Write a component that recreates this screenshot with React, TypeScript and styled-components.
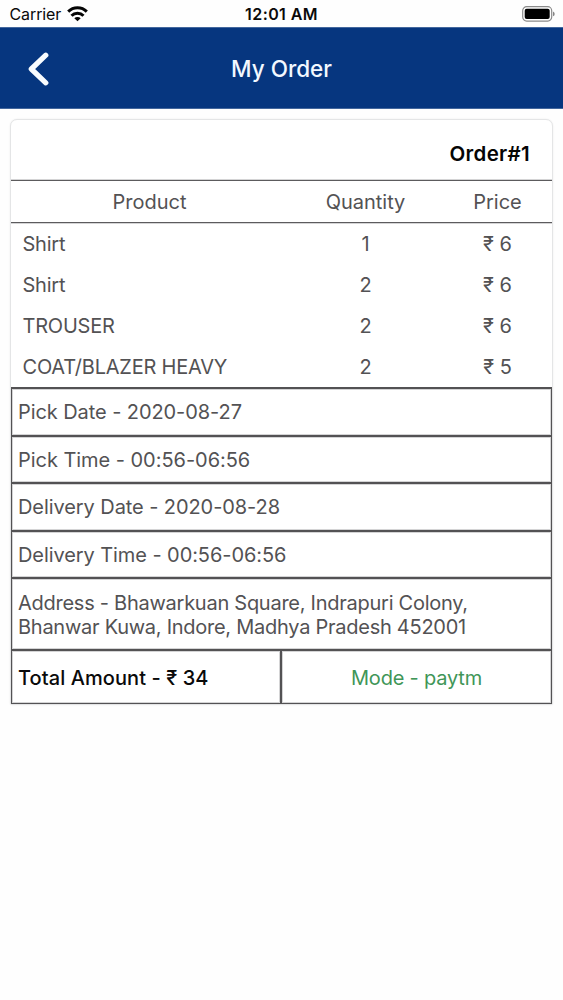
import React from 'react';
import styled, { createGlobalStyle } from 'styled-components';

const GlobalStyle = createGlobalStyle`
  *, *::before, *::after { box-sizing: border-box; }
  html, body { margin: 0; background: #fefefe; }
  body { font-family: Inter, 'Liberation Sans', sans-serif; color: #535254; }
`;

const Screen = styled.main`
  min-height: 1000px;
  background: #fefefe;
`;

const StatusBar = styled.div`
  display: grid;
  grid-template-columns: 1fr auto 1fr;
  align-items: center;
  height: 27px;
  padding: 1px 8px 0 9.5px;
  color: #0a0a0a;
  font-size: 16px;
`;

const Carrier = styled.div`
  display: flex;
  align-items: center;
  gap: 6px;
  letter-spacing: -0.1px;
`;

const Clock = styled.div`
  margin-right: 1.5px;
  font-weight: 600;
  font-size: 16px;
  letter-spacing: 0.4px;
`;

const BatterySlot = styled.div`
  display: flex;
  justify-content: flex-end;
`;

const Header = styled.header`
  display: grid;
  grid-template-columns: 80px 1fr 80px;
  align-items: center;
  height: 82px;
  background: #06367f;
  border: solid #43679d;
  border-width: 1px 0;
`;

const BackButton = styled.button`
  display: flex;
  padding: 1px 0 0 28px;
  border: 0;
  background: none;
  color: #f8fcff;
`;

const Title = styled.h1`
  margin: 0;
  text-align: center;
  color: #f3f9ff;
  font-size: 22.5px;
  font-weight: 500;
  letter-spacing: 0;
`;

const Card = styled.section`
  margin: 10px 10px 0;
  border: 1px solid #e4e5e6;
  border-radius: 7px 7px 2px 2px;
  background: #fff;
  box-shadow: 0 0 2px rgba(0, 0, 0, 0.08);
`;

const OrderNumber = styled.div`
  display: flex;
  justify-content: flex-end;
  align-items: center;
  height: 60px;
  padding: 7px 22px 1px 0;
  color: #050505;
  font-size: 20.5px;
  font-weight: 600;
  letter-spacing: 0.3px;
`;

const ProductRow = styled.div<{ $head?: boolean }>`
  display: grid;
  grid-template-columns: 277px 155px 109px;
  align-items: center;
  height: ${(p) => (p.$head ? '43px' : '40.75px')};
  border: solid #5c5b5d;
  border-width: ${(p) => (p.$head ? '1px 0' : '0')};
  box-shadow: ${(p) => (p.$head ? '0 -1px 0 #d4d4d5, 0 1px 0 #d4d4d5' : 'none')};
  font-size: 20px;
`;

const Products = styled.div`
  padding: 1px 0 0;
  height: 164px;
`;

const Cell = styled.span<{ $align?: string }>`
  padding-left: ${(p) => (p.$align === 'left' ? '11.5px' : '0')};
  letter-spacing: ${(p) => (p.$align === 'left' ? '-0.22px' : '0')};
  text-align: ${(p) => p.$align ?? 'center'};
`;

const Details = styled.div`
  border: 1px solid #535254;
  border-top-width: 2px;
`;

const DetailRow = styled.div<{ $height: number; $tracking?: number }>`
  display: flex;
  align-items: center;
  height: ${(p) => p.$height}px;
  padding: 0 6px;
  border-bottom: 2px solid #535254;
  box-shadow: inset 0 0 0 1px #d4d4d5;
  font-size: 20px;
  line-height: 24px;
  letter-spacing: ${(p) => p.$tracking ?? -0.08}px;
`;

const Address = styled.span`
  display: block;
  padding-top: 2px;
`;

const Summary = styled.div`
  display: grid;
  grid-template-columns: 270px 1fr;
  height: 52px;
  font-size: 20px;
`;

const Total = styled.div`
  display: flex;
  align-items: center;
  padding: 2px 0 0 6px;
  border-right: 2px solid #535254;
  box-shadow: inset 0 0 0 1px #d4d4d5;
  color: #0a0a0a;
  font-weight: 500;
  letter-spacing: 0.08px;
`;

const Mode = styled.div`
  display: flex;
  align-items: center;
  justify-content: center;
  padding-top: 2px;
  box-shadow: inset 0 0 0 1px #d4d4d5;
  color: #3f9658;
  letter-spacing: -0.2px;
`;

const WifiIcon = () => (
  <svg width="21" height="16" viewBox="0 0 21 16" fill="none" stroke="#050505" strokeWidth="3">
    <path d="M1.2 5.6a13.3 13.3 0 0 1 18.6 0" />
    <path d="M4.5 9.7a8.4 8.4 0 0 1 12 0" />
    <path d="M10.5 15.3 7.3 12.2a4.6 4.6 0 0 1 6.4 0Z" fill="#050505" stroke="none" />
  </svg>
);

const BatteryIcon = () => (
  <svg width="33" height="16" viewBox="0 0 33 16">
    <rect x="0.7" y="0.7" width="29" height="14.4" rx="4" fill="none" stroke="#8a8a8a" strokeWidth="1.2" />
    <rect x="2.7" y="2.7" width="25" height="10.4" rx="2" fill="#000" />
    <path d="M31 5.6q1.7.6 1.7 2.3t-1.7 2.3Z" fill="#858585" />
  </svg>
);

const BackIcon = () => (
  <svg width="22" height="34" viewBox="0 0 22 34" fill="none" stroke="currentColor" strokeWidth="5.2" strokeLinecap="round" strokeLinejoin="round">
    <path d="M17.8 3.2 3.3 17 17.8 30.8" />
  </svg>
);

const products = [
  { name: 'Shirt', quantity: 1, price: 6 },
  { name: 'Shirt', quantity: 2, price: 6 },
  { name: 'TROUSER', quantity: 2, price: 6 },
  { name: 'COAT/BLAZER HEAVY', quantity: 2, price: 5 },
];

const details = [
  { text: 'Pick Date - 2020-08-27', height: 48 },
  { text: 'Pick Time - 00:56-06:56', height: 47, tracking: -0.04 },
  { text: 'Delivery Date - 2020-08-28', height: 48 },
  { text: 'Delivery Time - 00:56-06:56', height: 47 },
  {
    text: (
      <Address>
        Address - Bhawarkuan Square, Indrapuri Colony,
        <br />
        Bhanwar Kuwa, Indore, Madhya Pradesh 452001
      </Address>
    ),
    height: 72,
    tracking: -0.26,
  },
];

export default function App() {
  return (
    <Screen>
      <GlobalStyle />
      <StatusBar>
        <Carrier>
          <span>Carrier</span>
          <WifiIcon />
        </Carrier>
        <Clock>12:01 AM</Clock>
        <BatterySlot>
          <BatteryIcon />
        </BatterySlot>
      </StatusBar>
      <Header>
        <BackButton aria-label="Back">
          <BackIcon />
        </BackButton>
        <Title>My Order</Title>
      </Header>
      <Card>
        <OrderNumber>Order#1</OrderNumber>
        <ProductRow $head>
          <Cell>Product</Cell>
          <Cell>Quantity</Cell>
          <Cell>Price</Cell>
        </ProductRow>
        <Products>
          {products.map((product, index) => (
            <ProductRow key={index}>
              <Cell $align="left">{product.name}</Cell>
              <Cell>{product.quantity}</Cell>
              <Cell>₹ {product.price}</Cell>
            </ProductRow>
          ))}
        </Products>
        <Details>
          {details.map((detail, index) => (
            <DetailRow key={index} $height={detail.height} $tracking={detail.tracking}>
              <span>{detail.text}</span>
            </DetailRow>
          ))}
          <Summary>
            <Total>Total Amount - ₹ 34</Total>
            <Mode>Mode - paytm</Mode>
          </Summary>
        </Details>
      </Card>
    </Screen>
  );
}
